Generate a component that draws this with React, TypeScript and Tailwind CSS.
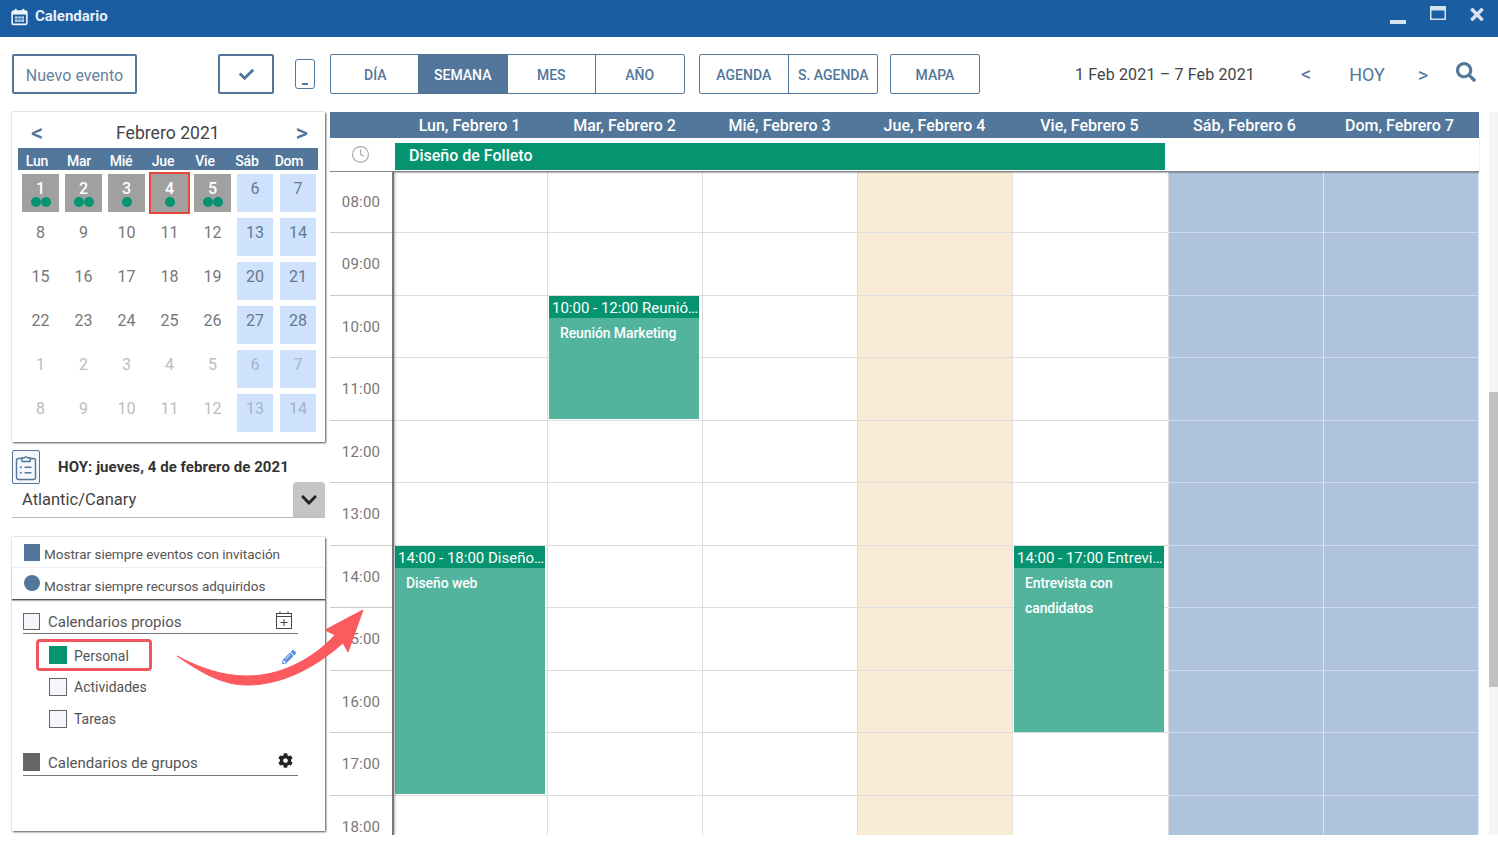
import React from "react";
import { FaCheck, FaSearch, FaCog, FaPencilAlt, FaTimes, FaChevronDown } from "react-icons/fa";
import { Clock } from "lucide-react";

const days = ["Lun, Febrero 1", "Mar, Febrero 2", "Mié, Febrero 3", "Jue, Febrero 4", "Vie, Febrero 5", "Sáb, Febrero 6", "Dom, Febrero 7"];
const hours = ["08:00", "09:00", "10:00", "11:00", "12:00", "13:00", "14:00", "15:00", "16:00", "17:00", "18:00"];
const wk = ["Lun", "Mar", "Mié", "Jue", "Vie", "Sáb", "Dom"];
const weeks = [
  [1, 2, 3, 4, 5, 6, 7],
  [8, 9, 10, 11, 12, 13, 14],
  [15, 16, 17, 18, 19, 20, 21],
  [22, 23, 24, 25, 26, 27, 28],
  [1, 2, 3, 4, 5, 6, 7],
  [8, 9, 10, 11, 12, 13, 14],
];
const dots = [2, 2, 1, 1, 2];

function Seg({ label, active, w, last }: { label: string; active?: boolean; w: string; last?: boolean }) {
  return (
    <div className={`${w} flex items-center justify-center pt-[2px] text-[14px] font-medium ${active ? "bg-[#52779a] text-white" : "text-[#52779a]"} ${last ? "" : "border-r border-[#52779a]"}`}>
      {label}
    </div>
  );
}

function Event({ title, body, top, h }: { title: string; body: string; top: string; h: string }) {
  return (
    <div className={`absolute left-[1px] w-[150px] ${top} ${h} bg-[#52b49d] text-white`}>
      <div className="h-[22px] bg-[#069470] pl-[3px] text-[15px] leading-[24px] truncate">{title}</div>
      <div className="pl-[11px] pr-2 pt-[3px] text-[14px] leading-[25px] font-medium tracking-[-0.1px]">{body}</div>
    </div>
  );
}

function Check() {
  return <div className="w-[17px] h-[17px] border border-[#666] bg-[#f5f6fb] shrink-0" />;
}

function CalendarIcon() {
  return (
    <svg width="17" height="18" viewBox="0 0 18 18" className="shrink-0 text-[#eef4fa]">
      <rect x="1.2" y="2.8" width="15.6" height="14" rx="1.5" fill="none" stroke="currentColor" strokeWidth="1.7" />
      <rect x="1.2" y="3" width="15.6" height="3.4" fill="currentColor" />
      <rect x="4" y="0.4" width="2" height="3.6" fill="currentColor" />
      <rect x="12" y="0.4" width="2" height="3.6" fill="currentColor" />
      <path d="M4.2 8.4h9.6v5.8H4.2z" fill="currentColor" opacity="0.8" />
      <path d="M4.2 11.2h9.6M7.4 8.4v5.8M10.6 8.4v5.8" stroke="#1a5ea1" strokeWidth="0.8" />
    </svg>
  );
}

function ClipboardIcon() {
  return (
    <svg width="22" height="27" viewBox="0 0 22 27" fill="none" stroke="#52779a" strokeWidth="1.4">
      <rect x="1.5" y="4.5" width="19" height="21" rx="2" />
      <path d="M7 7.5V3.8h2.6a1.5 1.5 0 0 1 2.8 0H15v3.7z" fill="#f4f8fc" />
      <path d="M9.5 13.2h7M9.5 18.8h7" strokeWidth="1.6" />
      <circle cx="5.8" cy="13.2" r="1" fill="#52779a" stroke="none" />
      <circle cx="5.8" cy="18.8" r="1" fill="#52779a" stroke="none" />
    </svg>
  );
}

function CalendarAddIcon() {
  return (
    <svg width="16" height="18" viewBox="0 0 16 18" fill="none" stroke="#444" strokeWidth="1" className="ml-auto mr-[6px] mb-[1px]">
      <rect x="0.5" y="2.5" width="15" height="15" />
      <path d="M0.5 5.5h15M4 0.5v2.5M12 0.5v2.5M8 8v7M4.5 11.5h7" />
    </svg>
  );
}

function MaxIcon() {
  return (
    <svg width="16" height="14" viewBox="0 0 16 14" className="mr-[23px] -mt-[8px]" fill="none" stroke="#d5e3f0">
      <rect x="0.75" y="0.75" width="14.5" height="12.5" strokeWidth="1.5" />
      <rect x="0.75" y="0.75" width="14.5" height="3" fill="#d5e3f0" strokeWidth="1.5" />
    </svg>
  );
}

export default function App() {
  return (
    <div className="relative w-full h-[841px] overflow-hidden bg-white font-['Roboto',sans-serif] text-[#333]">
      {/* Title bar */}
      <div className="h-[37px] bg-[#1a5ea1] flex items-center pl-[11px] pr-[13px] pb-[4px] text-white">
        <CalendarIcon />
        <span className="ml-[7px] text-[15px] font-bold text-[#e8f0f8]">Calendario</span>
        <div className="ml-auto flex items-center text-[#d5e3f0]">
          <div className="w-[16px] h-[4px] bg-[#d5e3f0] mt-[10px] mr-[24px]" />
          <MaxIcon />
          <FaTimes className="w-[16px] h-[19px] -mt-[5px]" />
        </div>
      </div>

      {/* Toolbar */}
      <div className="h-[75px] pt-[17px] pl-3 flex items-start">
        <div className="w-[125px] h-[40px] border-2 border-[#52779a] rounded-[2px] flex items-center justify-center pt-[3px] text-[16px] tracking-[0.05px] text-[#64839f]">Nuevo evento</div>
        <div className="ml-[81px] w-[56px] h-[40px] border-2 border-[#52779a] rounded-[2px] flex items-center justify-center text-[#52779a]">
          <FaCheck className="w-[15px] h-[15px]" />
        </div>
        <div className="ml-[21px] mt-[5px] w-[20px] h-[30px] border-[1.5px] border-[#52779a] rounded-[3px] flex items-end justify-center pb-[3px]">
          <div className="w-[6px] h-[2px] bg-[#52779a]" />
        </div>
        <div className="ml-[15px] h-[40px] w-[355px] border border-[#52779a] rounded-[2px] flex overflow-hidden">
          <Seg label="DÍA" w="w-[88px] pl-[2px]" />
          <Seg label="SEMANA" active w="w-[90px]" />
          <Seg label="MES" w="w-[88px]" />
          <Seg label="AÑO" w="w-[89px]" last />
        </div>
        <div className="ml-[14px] h-[40px] w-[179px] border border-[#52779a] rounded-[2px] flex overflow-hidden">
          <Seg label="AGENDA" w="w-[89px]" />
          <Seg label="S. AGENDA" w="w-[89px] pl-[1px]" last />
        </div>
        <div className="ml-[12px] h-[40px] w-[90px] border border-[#52779a] rounded-[2px] flex overflow-hidden">
          <Seg label="MAPA" w="w-full" last />
        </div>
        <div className="ml-[95px] mt-[11px] text-[16px] leading-[20px] tracking-[0.15px] text-[#444]">1 Feb 2021 – 7 Feb 2021</div>
        <div className="ml-[46px] mt-[8px] text-[20px] leading-[24px] text-[#52779a]">&lt;</div>
        <div className="ml-[38px] mt-[9px] text-[18px] leading-[24px] text-[#52779a]">HOY</div>
        <div className="ml-[33px] mt-[9px] text-[20px] leading-[24px] text-[#52779a]">&gt;</div>
        <FaSearch className="ml-[28px] mt-[8px] w-[20px] h-[20px] text-[#52779a]" />
      </div>

      {/* Main */}
      <div className="h-[723px] pl-3 flex items-start">
        {/* Sidebar */}
        <div className="w-[313px] shrink-0 flex flex-col">
          <div className="h-[330px] px-[6px] shadow-[0_0_1px_rgba(0,0,0,0.35),1px_1px_2px_rgba(0,0,0,0.65)] bg-white">
            <div className="h-[36px] flex items-end justify-between pl-[13px] pr-[11px] pb-[3px]">
              <span className="text-[24px] leading-[24px] font-medium text-[#52779a]">&lt;</span>
              <span className="text-[17.6px] leading-[24px] text-[#444] -ml-[3px]">Febrero 2021</span>
              <span className="text-[24px] leading-[24px] font-medium text-[#52779a]">&gt;</span>
            </div>
            <div className="w-[300px] h-[22px] pr-[6px] bg-[#52779a] grid grid-cols-7 text-white text-[14px] font-medium leading-[26px] tracking-[-0.2px] text-center">
              {wk.map((d) => (
                <div key={d} className="-translate-x-[2px]">{d}</div>
              ))}
            </div>
            <div className="w-[301px] pt-1 flex flex-col">
              {weeks.map((wkDays, r) => (
                <div key={r} className="grid grid-cols-7 h-[44px]">
                  {wkDays.map((n, i) => {
                    const active = r === 0 && i < 5;
                    const weekend = i >= 5;
                    const other = r >= 4;
                    return (
                      <div
                        key={i}
                        className={`ml-1 h-[38px] text-center text-[16px] leading-[18px] pt-[6px] ${weekend ? "w-[36px] bg-[#cfe2fd]" : "w-[37px]"} ${active ? "bg-[#a0a0a0] text-white font-medium" : ""} ${
                          r === 0 && i === 3 ? "outline-2 outline-[#e5483b]" : ""
                        } ${!active && !weekend ? (other ? "text-[#bdbdbd]" : "text-[#777]") : ""} ${weekend ? (other ? "text-[#a3b5cc]" : "text-[#64798f]") : ""}`}
                      >
                        <div>{n}</div>
                        {active && (
                          <div className="flex justify-center -mt-[1px]">
                            {Array.from({ length: dots[i] }).map((_, k) => (
                              <div key={k} className="w-[10px] h-[10px] rounded-full bg-[#069470]" />
                            ))}
                          </div>
                        )}
                      </div>
                    );
                  })}
                </div>
              ))}
            </div>
          </div>

          <div className="h-[40px] flex items-center pt-[10px]">
            <div className="w-[28px] h-[34px] border border-[#52779a] rounded-[2px] flex items-center justify-center bg-[#f4f8fc]">
              <ClipboardIcon />
            </div>
            <div className="ml-[18px] text-[15px] font-bold tracking-[0.06px] text-[#333]">HOY: jueves, 4 de febrero de 2021</div>
          </div>
          <div className="h-[36px] border-b border-[#bbb] flex justify-between">
            <span className="pl-[10px] text-[16.5px] leading-[36px] text-[#444]">Atlantic/Canary</span>
            <div className="w-[32px] h-[35px] bg-[#c4c4c4] rounded-t-[4px] flex items-center justify-center text-[#222]">
              <FaChevronDown className="w-[18px] h-[18px]" />
            </div>
          </div>

          <div className="mt-[19px] h-[294px] shadow-[0_0_1px_rgba(0,0,0,0.35),1px_1px_2px_rgba(0,0,0,0.65)] bg-white">
            <div className="h-[31px] border-b border-[#eee] flex items-start pl-[12px] pt-[7px]">
              <div className="w-[16px] h-[17px] bg-[#52779a]" />
              <span className="ml-1 text-[13.5px] leading-[20px] text-[#555]">Mostrar siempre eventos con invitación</span>
            </div>
            <div className="h-[32px] border-b border-[#555] shadow-[0_1px_1px_rgba(0,0,0,0.3)] flex items-start pl-[12px] pt-[7px]">
              <div className="w-[16px] h-[16px] rounded-full bg-[#52779a]" />
              <span className="ml-1 text-[13.5px] leading-[20px] mt-[1px] text-[#555]">Mostrar siempre recursos adquiridos</span>
            </div>

            <div className="mx-[11px] w-[275px] h-[33px] mt-[1px] border-b border-[#777] flex items-end pb-[3px]">
              <Check />
              <span className="ml-2 text-[15px] leading-[20px] -mb-[2px] text-[#555]">Calendarios propios</span>
              <CalendarAddIcon />
            </div>
            <div className="flex items-center h-[32px] mt-[5px] ml-[24px] w-[116px] border-[3px] border-[#f0565c] rounded-[4px] pl-[10px]">
              <div className="w-[18px] h-[18px] bg-[#069470]" />
              <span className="ml-[7px] pt-[2px] text-[14px] text-[#555]">Personal</span>
            </div>
            <div className="flex items-center h-[32px] pl-[37px]">
              <div className="w-[18px] h-[18px] border border-[#666] bg-[#f5f6fb] shrink-0" />
              <span className="ml-[7px] text-[14px] text-[#555]">Actividades</span>
            </div>
            <div className="flex items-center h-[32px] pl-[37px]">
              <div className="w-[18px] h-[18px] border border-[#666] bg-[#f5f6fb] shrink-0" />
              <span className="ml-[7px] text-[14px] text-[#555]">Tareas</span>
            </div>
            <div className="mx-[11px] w-[275px] h-[33px] mt-[8px] border-b border-[#777] flex items-end pb-[3px]">
              <div className="w-[17px] h-[18px] bg-[#666] mb-[1px]" />
              <span className="ml-2 text-[15px] leading-[20px] -mb-[1px] text-[#555]">Calendarios de grupos</span>
              <FaCog className="ml-auto mr-[5px] mb-[4px] w-[15px] h-[15px] text-[#222]" />
            </div>
          </div>
        </div>

        {/* Calendar */}
        <div className="ml-[5px] w-[1168px] h-[723px] flex">
          <div className="w-[1149px] h-[723px] flex flex-col">
            <div className="h-[26px] bg-[#52779a] flex text-white text-[16px] font-medium leading-[28px] shrink-0">
              <div className="w-[63px] shrink-0" />
              {days.map((d) => (
                <div key={d} className="w-[155px] text-center -translate-x-[1px]">{d}</div>
              ))}
            </div>
            <div className="h-[34px] flex relative z-10 shrink-0 border-b border-[#888] shadow-[0_1px_1px_rgba(0,0,0,0.25)]">
              <div className="w-[65px] flex justify-center items-center pb-[1px] pr-[4px] text-[#aaa]">
                <Clock className="w-[19px] h-[19px]" strokeWidth={1.5} />
              </div>
              <div className="mt-[5px] w-[770px] h-[27px] bg-[#069470] text-white text-[16px] font-medium pl-[14px] leading-[25px]">Diseño de Folleto</div>
            </div>
            <div className="h-[663px] overflow-hidden flex shrink-0">
              <div className="w-[64px] shrink-0 border-r-2 border-[#777] shadow-[1px_0_2px_rgba(0,0,0,0.3)] relative z-10 bg-white">
                {hours.map((h, i) => (
                  <div key={h} className={`${i === 0 ? "h-[61px]" : "h-[62.5px]"} border-b border-[#ccc] flex items-center justify-center pt-[1px] text-[15px] text-[#777] tracking-[0.2px]`}>
                    {h}
                  </div>
                ))}
              </div>
              <div className="grid grid-cols-[154px_155px_155px_155px_156px_155px_155px] w-[1085px]">
                {days.map((d, c) => (
                  <div
                    key={d}
                    className={`relative border-r ${c === 3 ? "bg-[#faebd9] border-[#e7e2dc]" : c >= 5 ? "bg-[#afc3dd] border-[#d5e4f6]" : "border-[#dcdcdc]"}`}
                  >
                    {hours.map((h, i) => (
                      <div key={h} className={`${i === 0 ? "h-[61px]" : "h-[62.5px]"} border-b ${c >= 5 ? "border-[#cbdcf2]" : "border-[#dedede]"}`} />
                    ))}
                    {c === 0 && <Event title="14:00 - 18:00 Diseño web" body="Diseño web" top="top-[374px]" h="h-[248px]" />}
                    {c === 1 && <Event title="10:00 - 12:00 Reunión Marketing" body="Reunión Marketing" top="top-[124px]" h="h-[123px]" />}
                    {c === 4 && <Event title="14:00 - 17:00 Entrevista con candidatos" body="Entrevista con candidatos" top="top-[374px]" h="h-[186px]" />}
                  </div>
                ))}
              </div>
            </div>
          </div>
          <div className="ml-[10px] w-[9px] h-[723px] bg-[#f5f5f5] flex flex-col">
            <div className="h-[280px] shrink-0" />
            <div className="h-[295px] bg-[#c1c1c1] shrink-0" />
          </div>
        </div>
      </div>

      {/* Annotation arrow */}
      <svg className="absolute left-0 top-0 pointer-events-none z-20" width="1498" height="841" viewBox="0 0 1498 841">
        <path
          d="M177 656 C200 672 222 685 247 685 C285 685 318 665 343 643 L348 652 L363 610 L325 630 L335 635 C312 660 280 676 247 676 C222 676 200 668 177 656 Z"
          fill="#fb5a5f"
          stroke="#fb5a5f"
          strokeWidth="1"
          strokeLinejoin="round"
        />
      </svg>
      <FaPencilAlt className="absolute left-[282px] top-[650px] w-[14px] h-[14px] text-[#5b8de0] z-20" />
    </div>
  );
}
